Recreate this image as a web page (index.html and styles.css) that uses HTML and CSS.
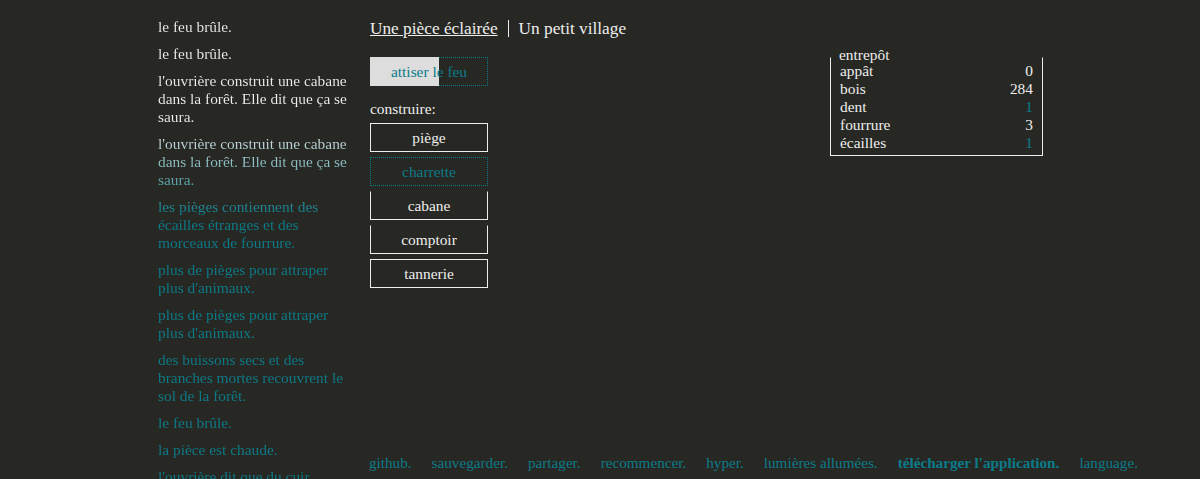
FILE: index.html
```html
<!DOCTYPE html>
<html lang="fr">
<head>
<meta charset="utf-8">
<title>Une pièce éclairée</title>
<link rel="stylesheet" href="styles.css">
</head>
<body>
<div class="page">
  <div class="notifications">
    <div class="notification">le feu brûle.</div>
    <div class="notification">le feu brûle.</div>
    <div class="notification">l'ouvrière construit une cabane dans la forêt. Elle dit que ça se saura.</div>
    <div class="notification">l'ouvrière construit une cabane dans la forêt. Elle dit que ça se saura.</div>
    <div class="notification">les pièges contiennent des écailles étranges et des morceaux de fourrure.</div>
    <div class="notification">plus de pièges pour attraper plus d'animaux.</div>
    <div class="notification">plus de pièges pour attraper plus d'animaux.</div>
    <div class="notification">des buissons secs et des branches mortes recouvrent le sol de la forêt.</div>
    <div class="notification">le feu brûle.</div>
    <div class="notification">la pièce est chaude.</div>
    <div class="notification">l'ouvrière dit que du cuir pourrait être utile, et que les villageois pourraient en fabriquer.</div>
  </div>
  <div class="main">
    <div class="header">
      <span class="header-btn selected">Une pièce éclairée</span>
      <span class="header-btn divided">Un petit village</span>
    </div>
    <div class="room">
      <div class="buttons">
        <div class="button disabled stoke">
          <div class="cooldown"></div>
          <span class="label">attiser le feu</span>
        </div>
        <div class="build-title">construire:</div>
        <div class="button">piège</div>
        <div class="button disabled">charrette</div>
        <div class="button no-top">cabane</div>
        <div class="button no-top">comptoir</div>
        <div class="button">tannerie</div>
      </div>
      <div class="stores">
        <div class="legend">entrepôt</div>
        <div class="store-row"><span>appât</span><span>0</span></div>
        <div class="store-row"><span>bois</span><span>284</span></div>
        <div class="store-row"><span>dent</span><span class="teal">1</span></div>
        <div class="store-row"><span>fourrure</span><span>3</span></div>
        <div class="store-row"><span>écailles</span><span class="teal">1</span></div>
      </div>
    </div>
    <div class="menu">
      <span>github.</span>
      <span>sauvegarder.</span>
      <span>partager.</span>
      <span>recommencer.</span>
      <span>hyper.</span>
      <span>lumières allumées.</span>
      <span class="bold">télécharger l'application.</span>
      <span>language.</span>
    </div>
  </div>
</div>
</body>
</html>
```

FILE: styles.css
```css
html, body {
  margin: 0;
  padding: 0;
  background: #272823;
}
body {
  font-family: "Liberation Serif", "Times New Roman", serif;
  font-size: 15.4px;
  color: #eeeeee;
  height: 479px;
  overflow: hidden;
}
.page {
  display: flex;
  height: 479px;
  padding-left: 158px;
}
.notifications {
  width: 194px;
  margin-right: 6px;
  flex: none;
  padding-top: 18px;
  height: 461px;
  overflow: hidden;
  line-height: 18px;
  background: linear-gradient(to bottom, #eeeeee 0px, #eeeeee 125px, #0b7b8a 215px, #0b7b8a 100%);
  -webkit-background-clip: text;
  background-clip: text;
  color: transparent;
}
.notification {
  margin-bottom: 9px;
}
.main {
  flex: 1;
  min-width: 0;
  margin-left: 12px;
  display: flex;
  flex-direction: column;
  padding-right: 62px;
}
.header {
  display: flex;
  padding-top: 20px;
  margin-bottom: 20px;
  font-size: 17.3px;
  line-height: 17px;
}
.header-btn {
  padding-right: 10px;
}
.header-btn.selected {
  text-decoration: underline;
}
.header-btn.divided {
  padding-left: 10px;
  border-left: 1px solid #eeeeee;
}
.room {
  display: flex;
  width: 673px;
}
.buttons {
  width: 118px;
}
.button {
  position: relative;
  box-sizing: border-box;
  width: 118px;
  height: 29px;
  border: 1px solid #eeeeee;
  text-align: center;
  line-height: 17px;
  padding: 5px 0;
  margin-bottom: 5px;
}
.button.disabled {
  border: 1px dotted #0b7b8a;
  color: #0b7b8a;
}
.button.no-top {
  border-top-color: transparent;
}
.stoke {
  margin-bottom: 0;
}
.cooldown {
  position: absolute;
  left: -1px;
  top: -1px;
  bottom: -1px;
  width: 69px;
  background: #dddddd;
}
.label {
  position: relative;
}
.build-title {
  margin-top: 14px;
  margin-bottom: 5px;
  line-height: 18px;
}
.stores {
  position: relative;
  margin-left: auto;
  width: 213px;
  box-sizing: border-box;
  border: 1px solid #eeeeee;
  border-top-color: transparent;
  padding: 4px 9px 3px 9px;
  align-self: flex-start;
  line-height: 18px;
}
.legend {
  position: absolute;
  top: -12px;
  left: 8px;
  line-height: 18px;
}
.store-row {
  display: flex;
  justify-content: space-between;
}
.teal {
  color: #0b7b8a;
}
.menu {
  margin-top: auto;
  display: flex;
  justify-content: flex-end;
  gap: 20px;
  color: #0b7b8a;
  line-height: 18px;
  padding-bottom: 7px;
  font-size: 15.2px;
  white-space: nowrap;
}
.menu span {
  flex: none;
}
.menu .bold {
  font-weight: bold;
}
```
